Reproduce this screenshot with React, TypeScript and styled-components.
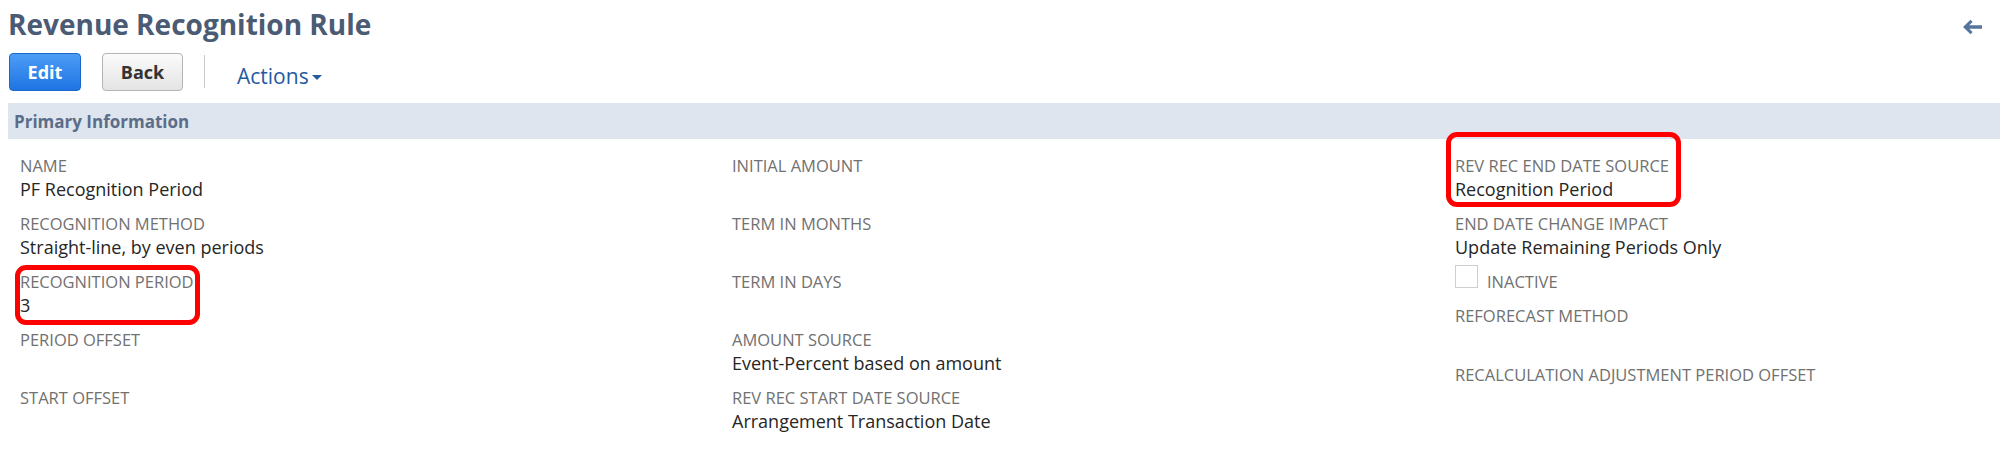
import React from 'react';
import styled, { createGlobalStyle } from 'styled-components';

type FieldData = {
  label: string;
  value?: string;
  gap?: number;
  highlight?: { left: number; top: number; width: number; height: number };
};

const columnOne: FieldData[] = [
  { label: 'Name', value: 'PF Recognition Period' },
  { label: 'Recognition Method', value: 'Straight-line, by even periods' },
  {
    label: 'Recognition Period',
    value: '3',
    highlight: { left: -5, top: -7, width: 185, height: 60 },
  },
  { label: 'Period Offset' },
  { label: 'Start Offset' },
];

const columnTwo: FieldData[] = [
  { label: 'Initial Amount' },
  { label: 'Term in Months' },
  { label: 'Term in Days' },
  { label: 'Amount Source', value: 'Event-Percent based on amount' },
  { label: 'Rev Rec Start Date Source', value: 'Arrangement Transaction Date' },
];

const RecordPage = () => {
  const renderField = (item: FieldData, index: number) => (
    <Field key={index} $gap={item.gap ?? 12}>
      <FieldLabel>{item.label}</FieldLabel>
      <FieldValue>{item.value}</FieldValue>
      {item.highlight && (
        <Highlight
          $left={item.highlight.left}
          $top={item.highlight.top}
          $width={item.highlight.width}
          $height={item.highlight.height}
        />
      )}
    </Field>
  );

  return (
    <PageWrapper>
      <GlobalStyle />
      <TitleRow>
        <PageTitle>Revenue Recognition Rule</PageTitle>
        <BackArrow viewBox="0 0 21 16" aria-hidden="true">
          <path d="M8.5 0.8 L1 8 L8.5 15.2 L10.6 13 L7.2 9.7 L20 9.7 L20 6.3 L7.2 6.3 L10.6 3 Z" />
        </BackArrow>
      </TitleRow>

      <Toolbar>
        <Button $primary>Edit</Button>
        <Button>Back</Button>
        <Divider />
        <ActionsMenu>
          Actions
          <Caret />
        </ActionsMenu>
      </Toolbar>

      <SectionBar>Primary Information</SectionBar>

      <FieldGrid>
        <FieldColumn>{columnOne.map(renderField)}</FieldColumn>
        <FieldColumn>{columnTwo.map(renderField)}</FieldColumn>
        <FieldColumn>
          {renderField(
            {
              label: 'Rev Rec End Date Source',
              value: 'Recognition Period',
              highlight: { left: -9, top: -24, width: 235, height: 75 },
            },
            0
          )}
          {renderField(
            { label: 'End Date Change Impact', value: 'Update Remaining Periods Only', gap: 5 },
            1
          )}
          <CheckboxRow>
            <CheckBox />
            <CheckLabel>Inactive</CheckLabel>
          </CheckboxRow>
          {renderField({ label: 'Reforecast Method', gap: 13 }, 2)}
          {renderField({ label: 'Recalculation Adjustment Period Offset' }, 3)}
        </FieldColumn>
      </FieldGrid>
    </PageWrapper>
  );
};

export default RecordPage;

// ========== Styled Components ==========

const GlobalStyle = createGlobalStyle`
  html, body {
    margin: 0;
    padding: 0;
    background: #ffffff;
  }
  body {
    font-family: "Open Sans", "Liberation Sans", sans-serif;
  }
`;

const PageWrapper = styled.div`
  width: 2000px;
  height: 449px;
  padding-left: 8px;
  box-sizing: border-box;
  overflow: hidden;
  background: #fff;
`;

const TitleRow = styled.div`
  display: flex;
  justify-content: space-between;
  align-items: flex-start;
  padding-top: 7px;
`;

const PageTitle = styled.h1`
  margin: 0;
  font-size: 28px;
  line-height: 34px;
  font-weight: 700;
  color: #4b5b73;
`;

const BackArrow = styled.svg`
  width: 21px;
  height: 16px;
  margin-top: 12px;
  margin-right: 17px;
  fill: #55759c;
`;

const Toolbar = styled.div`
  display: flex;
  align-items: flex-start;
  margin-top: 12px;
  padding-left: 1px;
  height: 38px;
`;

const Button = styled.button<{ $primary?: boolean }>`
  box-sizing: border-box;
  height: 38px;
  width: ${(p) => (p.$primary ? '72px' : '81px')};
  padding: 0;
  margin-right: 21px;
  border-radius: 4px;
  font-family: "Open Sans", "Liberation Sans", sans-serif;
  font-size: 18px;
  font-weight: 700;
  cursor: pointer;
  color: ${(p) => (p.$primary ? '#ffffff' : '#333333')};
  border: 1px solid ${(p) => (p.$primary ? '#1a66cc' : '#b4b4b4')};
  background: ${(p) =>
    p.$primary
      ? 'linear-gradient(#4c9df6, #1f74e2)'
      : 'linear-gradient(#fbfbfb, #e4e4e4)'};
`;

const Divider = styled.div`
  width: 1px;
  height: 33px;
  margin-top: 2px;
  background: #c8c8c8;
  margin-right: 32px;
`;

const ActionsMenu = styled.div`
  display: flex;
  align-items: center;
  margin-top: 11px;
  font-size: 21px;
  line-height: 24px;
  color: #245a9e;
  cursor: pointer;
`;

const Caret = styled.span`
  width: 0;
  height: 0;
  margin-left: 3px;
  margin-top: 3px;
  border-left: 5px solid transparent;
  border-right: 5px solid transparent;
  border-top: 5px solid #245a9e;
`;

const SectionBar = styled.div`
  margin-top: 12px;
  height: 36px;
  display: flex;
  align-items: center;
  padding-left: 6px;
  background: #dfe5ee;
  color: #5b6d88;
  font-size: 17px;
  font-weight: 700;
`;

const FieldGrid = styled.div`
  display: grid;
  grid-template-columns: 712px 723px 1fr;
  padding-top: 17px;
  padding-left: 12px;
`;

const FieldColumn = styled.div`
  display: flex;
  flex-direction: column;
`;

const Field = styled.div<{ $gap: number }>`
  position: relative;
  padding-bottom: ${(p) => p.$gap}px;
`;

const FieldLabel = styled.div`
  font-size: 16.5px;
  line-height: 20px;
  color: #717171;
  text-transform: uppercase;
  white-space: nowrap;
`;

const FieldValue = styled.div`
  font-size: 18px;
  line-height: 26px;
  height: 26px;
  color: #262626;
  white-space: nowrap;
`;

const Highlight = styled.div<{ $left: number; $top: number; $width: number; $height: number }>`
  position: absolute;
  left: ${(p) => p.$left}px;
  top: ${(p) => p.$top}px;
  width: ${(p) => p.$width}px;
  height: ${(p) => p.$height}px;
  box-sizing: border-box;
  border: 5px solid #ff0000;
  border-radius: 11px;
  pointer-events: none;
`;

const CheckboxRow = styled.div`
  display: flex;
  align-items: flex-start;
  height: 41px;
`;

const CheckBox = styled.span`
  width: 23px;
  height: 23px;
  box-sizing: border-box;
  border: 1px solid #cfcfcf;
  background: #fff;
`;

const CheckLabel = styled.span`
  margin-left: 9px;
  margin-top: 7px;
  font-size: 16.5px;
  line-height: 20px;
  color: #717171;
  text-transform: uppercase;
`;
